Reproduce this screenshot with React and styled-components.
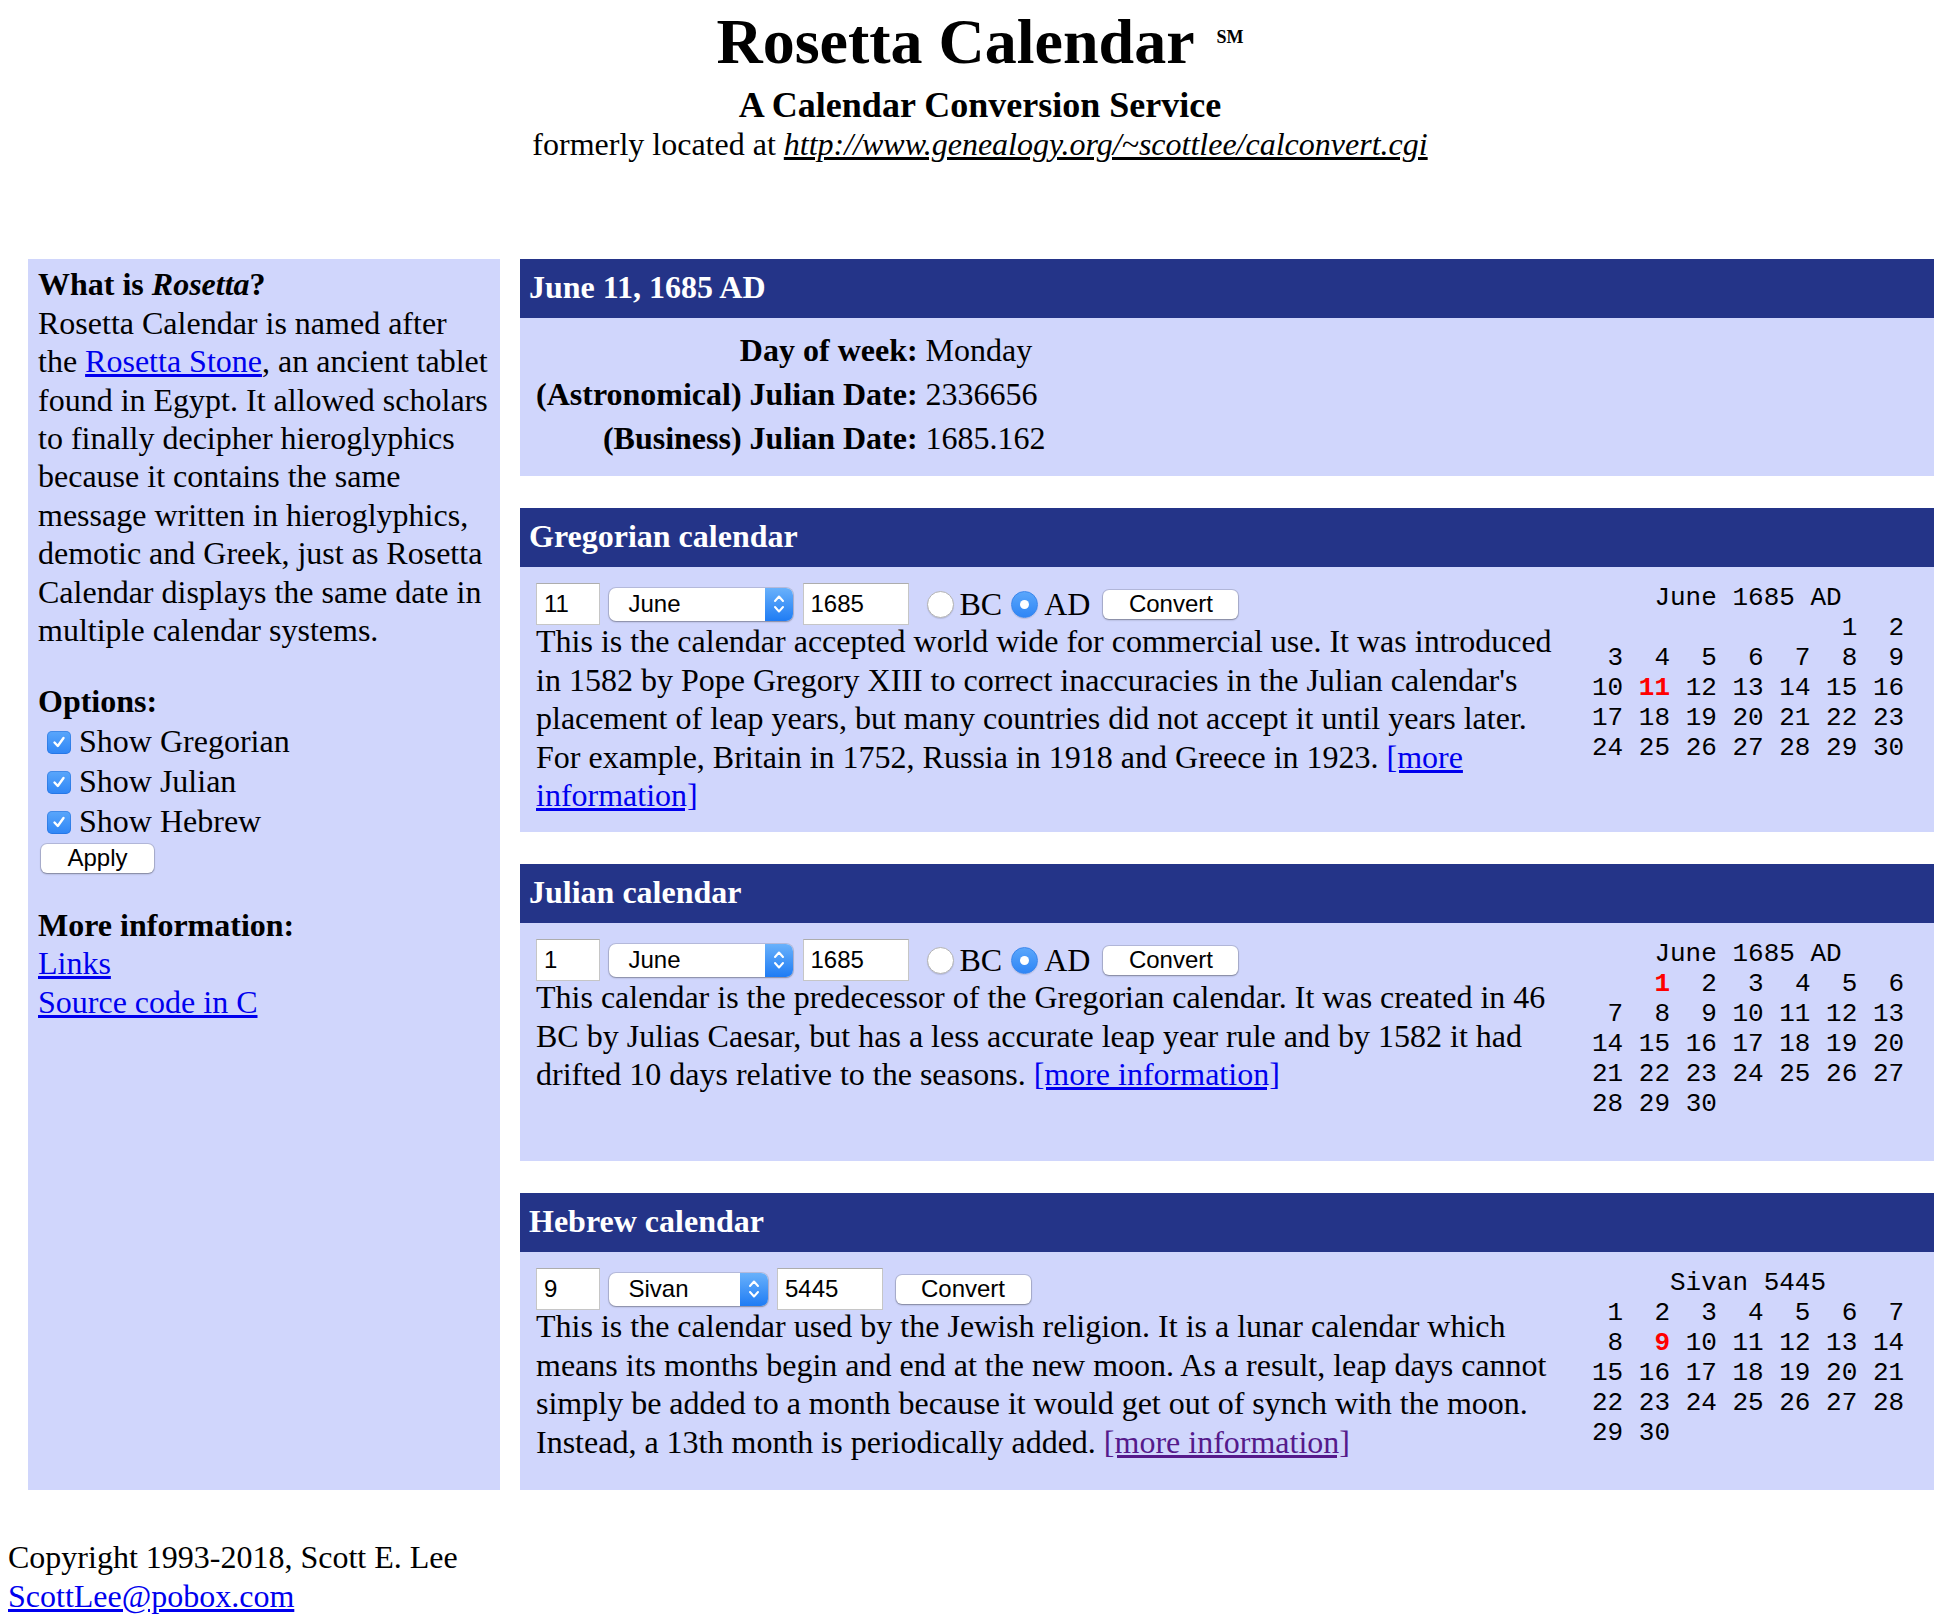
import React from "react";
import styled, { createGlobalStyle } from "styled-components";

const GlobalStyle = createGlobalStyle`
  html, body {
    margin: 0;
    padding: 0;
    background: #fff;
  }
  body {
    font-family: "Liberation Serif", "Times New Roman", serif;
    font-size: 32px;
    line-height: 38.4px;
    color: #000;
  }
`;

const LIGHT = "#d0d6fc";
const DARK = "#243488";

const calendars = [
  {
    key: "gregorian",
    title: "Gregorian calendar",
    day: "11",
    month: "June",
    monthWidth: 184.5,
    year: "1685",
    era: true,
    heading: "    June 1685 AD",
    offset: 5,
    days: 30,
    today: 11,
    text: "This is the calendar accepted world wide for commercial use. It was introduced in 1582 by Pope Gregory XIII to correct inaccuracies in the Julian calendar's placement of leap years, but many countries did not accept it until years later. For example, Britain in 1752, Russia in 1918 and Greece in 1923.",
  },
  {
    key: "julian",
    title: "Julian calendar",
    day: "1",
    month: "June",
    monthWidth: 184.5,
    year: "1685",
    era: true,
    heading: "    June 1685 AD",
    offset: 1,
    days: 30,
    today: 1,
    text: "This calendar is the predecessor of the Gregorian calendar. It was created in 46 BC by Julias Caesar, but has a less accurate leap year rule and by 1582 it had drifted 10 days relative to the seasons.",
  },
  {
    key: "hebrew",
    title: "Hebrew calendar",
    day: "9",
    month: "Sivan",
    monthWidth: 159,
    year: "5445",
    era: false,
    heading: "     Sivan 5445",
    offset: 0,
    days: 30,
    today: 9,
    visited: true,
    text: "This is the calendar used by the Jewish religion. It is a lunar calendar which means its months begin and end at the new moon. As a result, leap days cannot simply be added to a month because it would get out of synch with the moon. Instead, a 13th month is periodically added.",
  },
];

const buildWeeks = (offset, days) => {
  const cells = [...Array(offset).fill(null)];
  for (let d = 1; d <= days; d++) cells.push(d);
  const weeks = [];
  for (let i = 0; i < cells.length; i += 7) weeks.push(cells.slice(i, i + 7));
  return weeks;
};

const MonthGrid = ({ heading, offset, days, today }) => (
  <Pre>
    {heading}
    {"\n"}
    {buildWeeks(offset, days).map((week, w) => (
      <React.Fragment key={w}>
        {week.map((d, i) => {
          const sep = i > 0 ? " " : "";
          if (d === null) return <React.Fragment key={i}>{sep + "  "}</React.Fragment>;
          const label = String(d).padStart(2, " ");
          if (d === today)
            return (
              <React.Fragment key={i}>
                {sep}
                <Today>{label}</Today>
              </React.Fragment>
            );
          return <React.Fragment key={i}>{sep + label}</React.Fragment>;
        })}
        {"\n"}
      </React.Fragment>
    ))}
  </Pre>
);

const Chevrons = () => (
  <svg width="12" height="22" viewBox="0 0 12 22">
    <path d="M2 8 L6 3.5 L10 8" fill="none" stroke="#fff" strokeWidth="2" strokeLinecap="round" strokeLinejoin="round" />
    <path d="M2 14 L6 18.5 L10 14" fill="none" stroke="#fff" strokeWidth="2" strokeLinecap="round" strokeLinejoin="round" />
  </svg>
);

const Tick = () => (
  <svg width="14" height="14" viewBox="0 0 14 14">
    <path d="M2.5 7.5 L5.8 11 L11.5 3" fill="none" stroke="#fff" strokeWidth="2.4" strokeLinecap="round" strokeLinejoin="round" />
  </svg>
);

const CalendarPanel = ({ cal }) => (
  <Panel>
    <PanelHeader>{cal.title}</PanelHeader>
    <CalBody>
      <TextCol>
        <FormRow>
          <TextField $width={64} readOnly value={cal.day} />
          <Select $width={cal.monthWidth}>
            <SelectLabel>{cal.month}</SelectLabel>
            <SelectArrow>
              <Chevrons />
            </SelectArrow>
          </Select>
          <TextField $width={106} $left={9.5} readOnly value={cal.year} />
          {cal.era && (
            <EraGroup>
              <Radio />
              <EraLabel>BC</EraLabel>
              <Radio $checked />
              <EraLabel>AD</EraLabel>
            </EraGroup>
          )}
          <Button $width={135} $left={cal.era ? 13 : 12.5}>Convert</Button>
        </FormRow>
        {cal.text}{" "}
        <TextLink href="#" $visited={cal.visited}>
          [more information]
        </TextLink>
      </TextCol>
      <MonthGrid heading={cal.heading} offset={cal.offset} days={cal.days} today={cal.today} />
    </CalBody>
  </Panel>
);

const App = () => {
  return (
    <Page>
      <GlobalStyle />
      <Masthead>
        <Title>
          Rosetta Calendar<Mark>SM</Mark>
        </Title>
        <Subtitle>A Calendar Conversion Service</Subtitle>
        <Former>
          formerly located at <OldLink href="#">http://www.genealogy.org/~scottlee/calconvert.cgi</OldLink>
        </Former>
      </Masthead>

      <Layout>
        <Sidebar>
          <SideHeading>
            What is <em>Rosetta</em>?
          </SideHeading>
          <SideText>
            Rosetta Calendar is named after the <TextLink href="#">Rosetta Stone</TextLink>, an ancient tablet found in
            Egypt. It allowed scholars to finally decipher hieroglyphics because it contains the same message written in
            hieroglyphics, demotic and Greek, just as Rosetta Calendar displays the same date in multiple calendar
            systems.
          </SideText>

          <SideHeading $gap>Options:</SideHeading>
          {["Show Gregorian", "Show Julian", "Show Hebrew"].map((label) => (
            <OptionRow key={label}>
              <Checkbox>
                <Tick />
              </Checkbox>
              {label}
            </OptionRow>
          ))}
          <Button $width={113} $left={3} $top={3}>
            Apply
          </Button>

          <SideHeading $gap>More information:</SideHeading>
          <SideLinks>
            <TextLink href="#">Links</TextLink>
            <TextLink href="#">Source code in C</TextLink>
          </SideLinks>
        </Sidebar>

        <MainCol>
          <Panel>
            <PanelHeader>June 11, 1685 AD</PanelHeader>
            <InfoBody>
              <InfoLabel>Day of week:</InfoLabel>
              <InfoValue>Monday</InfoValue>
              <InfoLabel>(Astronomical) Julian Date:</InfoLabel>
              <InfoValue>2336656</InfoValue>
              <InfoLabel>(Business) Julian Date:</InfoLabel>
              <InfoValue>1685.162</InfoValue>
            </InfoBody>
          </Panel>
          {calendars.map((cal) => (
            <CalendarPanel key={cal.key} cal={cal} />
          ))}
        </MainCol>
      </Layout>

      <Footer>
        Copyright 1993-2018, Scott E. Lee
        <br />
        <TextLink href="#">ScottLee@pobox.com</TextLink>
      </Footer>
    </Page>
  );
};

export default App;

const Page = styled.div`
  padding: 7px 8px 9px;
  width: 1960px;
  box-sizing: border-box;
`;

const Masthead = styled.header`
  text-align: center;
`;

const Title = styled.h1`
  margin: 0;
  font-size: 64px;
  line-height: 70px;
  font-weight: bold;
`;

const Mark = styled.span`
  font-size: 18px;
  line-height: 0;
  vertical-align: 20px;
  margin-left: 22px;
`;

const Subtitle = styled.h3`
  margin: 8px 0 0;
  font-size: 36px;
  line-height: 40px;
  font-weight: bold;
`;

const Former = styled.div`
  line-height: 38.4px;
`;

const OldLink = styled.a`
  color: #000;
  font-style: italic;
  text-decoration: underline;
`;

const Layout = styled.div`
  display: flex;
  align-items: stretch;
  gap: 20px;
  margin-top: 96px;
  padding: 0 18px 0 20px;
`;

const Sidebar = styled.aside`
  flex: none;
  width: 472px;
  box-sizing: border-box;
  padding: 6px 10px;
  background: ${LIGHT};
`;

const SideHeading = styled.div`
  font-weight: bold;
  margin-top: ${(p) => (p.$gap ? "33px" : "0")};
`;

const SideText = styled.div``;

const OptionRow = styled.div`
  display: flex;
  align-items: center;
  height: 40px;
`;

const Checkbox = styled.span`
  flex: none;
  width: 24px;
  height: 23px;
  margin: 3px 8px 0 9px;
  border-radius: 5px;
  background: linear-gradient(#5aa6fb, #2f86f6);
  box-shadow: inset 0 0 0 1px rgba(20, 90, 200, 0.35);
  display: flex;
  align-items: center;
  justify-content: center;
`;

const SideLinks = styled.div`
  display: flex;
  flex-direction: column;
  align-items: flex-start;
`;

const TextLink = styled.a`
  color: ${(p) => (p.$visited ? "#551a8b" : "#0000ee")};
  text-decoration: underline;
`;

const Button = styled.button`
  display: flex;
  align-items: center;
  justify-content: center;
  flex: none;
  width: ${(p) => p.$width}px;
  height: 29px;
  margin: ${(p) => p.$top || 0}px 0 0 ${(p) => p.$left || 0}px;
  padding: 0;
  border: none;
  border-radius: 6px;
  background: #fff;
  box-shadow: 0 0 0 1px rgba(0, 0, 0, 0.13), 0 1px 2px rgba(0, 0, 0, 0.3);
  font-family: "Liberation Sans", Arial, sans-serif;
  font-size: 24px;
  color: #000;
`;

const MainCol = styled.main`
  flex: 1;
  display: flex;
  flex-direction: column;
  gap: 32px;
`;

const Panel = styled.section`
  background: ${LIGHT};
`;

const PanelHeader = styled.div`
  height: 59px;
  box-sizing: border-box;
  padding: 9px 9px 0;
  background: ${DARK};
  color: #fff;
  font-weight: bold;
`;

const InfoBody = styled.div`
  display: grid;
  grid-template-columns: max-content max-content;
  column-gap: 8px;
  padding: 10px 16px 16px;
`;

const InfoLabel = styled.div`
  text-align: right;
  font-weight: bold;
  padding: 2.8px 0;
`;

const InfoValue = styled.div`
  padding: 2.8px 0;
`;

const CalBody = styled.div`
  display: flex;
  gap: 27px;
  padding: 16px 30px 18px 16px;
`;

const TextCol = styled.div`
  flex: 1;
  min-width: 0;
`;

const FormRow = styled.div`
  display: flex;
  align-items: center;
  height: 42px;
  margin-bottom: -3px;
`;

const TextField = styled.input`
  flex: none;
  width: ${(p) => p.$width}px;
  height: 42px;
  margin: 0 0 0 ${(p) => p.$left || 0}px;
  box-sizing: border-box;
  padding: 0 7px;
  border: 1px solid #c6c6c6;
  border-top-color: #adadad;
  background: #fff;
  font-family: "Liberation Sans", Arial, sans-serif;
  font-size: 24px;
  color: #000;
  outline: none;
`;

const Select = styled.div`
  flex: none;
  display: flex;
  width: ${(p) => p.$width}px;
  height: 33px;
  margin-left: 8.5px;
  border-radius: 7px;
  background: #fff;
  box-shadow: 0 0 0 1px rgba(0, 0, 0, 0.12), 0 1px 2px rgba(0, 0, 0, 0.28);
  overflow: hidden;
`;

const SelectLabel = styled.span`
  flex: 1;
  display: flex;
  align-items: center;
  padding-left: 20px;
  font-family: "Liberation Sans", Arial, sans-serif;
  font-size: 24px;
`;

const SelectArrow = styled.span`
  flex: none;
  width: 28px;
  display: flex;
  align-items: center;
  justify-content: center;
  background: linear-gradient(#69b1fb, #1f7cf4);
`;

const EraGroup = styled.div`
  display: flex;
  align-items: center;
  margin-left: 18px;
`;

const Radio = styled.span`
  flex: none;
  box-sizing: border-box;
  width: 27px;
  height: 27px;
  border-radius: 50%;
  margin-right: 6px;
  background: ${(p) => (p.$checked ? "linear-gradient(#5aa6fb, #2f86f6)" : "#fff")};
  border: 1px solid ${(p) => (p.$checked ? "#3a86ec" : "#b3b3b3")};
  box-shadow: 0 1px 1px rgba(0, 0, 0, 0.12);
  display: flex;
  align-items: center;
  justify-content: center;
  &::after {
    content: "";
    display: ${(p) => (p.$checked ? "block" : "none")};
    width: 9px;
    height: 9px;
    border-radius: 50%;
    background: #fff;
  }
`;

const EraLabel = styled.span`
  margin-right: 9px;
  &:last-child {
    margin-right: 0;
  }
`;

const Pre = styled.pre`
  flex: none;
  width: 312px;
  margin: 0 0 24px;
  font-family: "Liberation Mono", "Courier New", monospace;
  font-size: 26px;
  line-height: 30px;
  white-space: pre;
`;

const Today = styled.b`
  color: #ff0000;
`;

const Footer = styled.footer`
  margin-top: 48px;
`;
